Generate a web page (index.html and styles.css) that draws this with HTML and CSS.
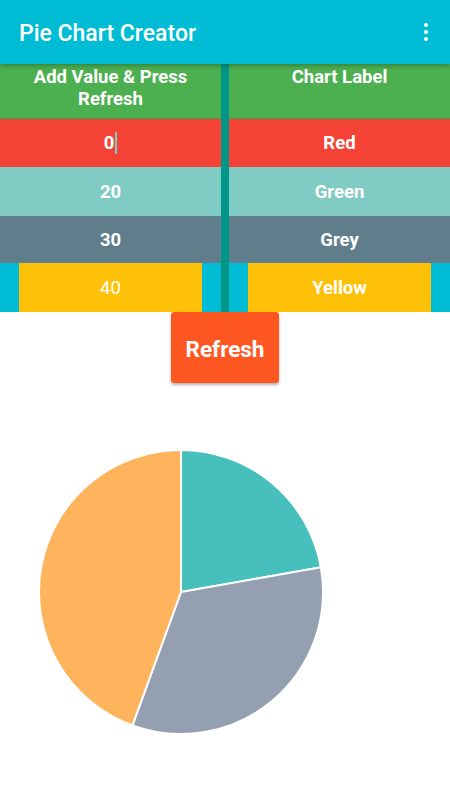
FILE: index.html
```html
<!DOCTYPE html>
<html>

<head>
    <meta name="viewport" content="width=device-width">
    <link rel="stylesheet" href="styles.css">
    <title>Pie Chart Creator</title>
</head>

<body>
    <div class="toolbar">
        <div class="title">Pie Chart Creator</div>
        <div class="overflow"><span></span><span></span><span></span></div>
    </div>

    <div class="table">
        <div class="divider"></div>

        <div class="cell head">Add Value &amp; Press Refresh</div>
        <div class="cell head">Chart Label</div>

        <div class="cell red"><span class="caret">0</span></div>
        <div class="cell red">Red</div>

        <div class="cell green">20</div>
        <div class="cell green">Green</div>

        <div class="cell grey">30</div>
        <div class="cell grey">Grey</div>

        <div class="cell pad"><div class="yellow light">40</div></div>
        <div class="cell pad"><div class="yellow">Yellow</div></div>
    </div>

    <div class="actions">
        <button class="refresh">Refresh</button>
    </div>

    <div class="chart">
        <svg width="300" height="300" viewBox="0 0 300 300">
            <path d="M150 150 L150 8 A142 142 0 0 1 289.84 125.34 Z" fill="#46BFBD" stroke="#fff" stroke-width="2" />
            <path d="M150 150 L289.84 125.34 A142 142 0 0 1 101.43 283.44 Z" fill="#949FB1" stroke="#fff" stroke-width="2" />
            <path d="M150 150 L101.43 283.44 A142 142 0 0 1 150 8 Z" fill="#FDB45C" stroke="#fff" stroke-width="2" />
        </svg>
    </div>
</body>

</html>
```

FILE: styles.css
```css
body,
html {
    width: 100%;
    height: 100%;
}

body {
    margin: 0;
    background: #fff;
    font-family: Roboto, "Noto Sans", sans-serif;
}

.toolbar {
    height: 64px;
    background-color: #00BCD4;
    display: flex;
    align-items: center;
    justify-content: space-between;
    padding: 0 22px 0 19px;
    box-shadow: 0 2px 4px rgba(0, 0, 0, 0.25);
    position: relative;
    z-index: 1;
}

.title {
    color: #fff;
    font-size: 23px;
    font-weight: 500;
    margin-top: 3px;
}

.overflow {
    display: flex;
    flex-direction: column;
    gap: 3px;
}

.overflow span {
    width: 4px;
    height: 4px;
    border-radius: 50%;
    background: #fff;
}

.table {
    display: grid;
    grid-template-columns: 221px 8px 221px;
    grid-template-rows: 55px 48px 49px 47px 49px;
}

.divider {
    grid-column: 2;
    grid-row: 1 / -1;
    background-color: #009688;
}

.cell {
    display: flex;
    align-items: center;
    justify-content: center;
    text-align: center;
    color: #fff;
    font-size: 18.5px;
    font-weight: 700;
}

.cell:nth-child(even) {
    grid-column: 1;
}

.cell:nth-child(odd) {
    grid-column: 3;
}

.head {
    background-color: #4CAF50;
    align-items: flex-start;
    line-height: 22px;
    padding: 2px 20px 0;
    border-bottom: 1px solid #3f9e43;
}

.red {
    background-color: #F44336;
}

.green {
    background-color: #80CBC4;
}

.grey {
    background-color: #607D8B;
}

.pad {
    background-color: #00BCD4;
    align-items: stretch;
    padding: 0 19px;
}

.yellow {
    flex: 1;
    display: flex;
    align-items: center;
    justify-content: center;
    background-color: #FFC107;
}

.light {
    font-weight: 400;
}

.caret {
    border-right: 2px solid #80CBC4;
    padding-right: 1px;
    line-height: 22px;
}

.actions {
    display: flex;
    justify-content: center;
}

.refresh {
    width: 108px;
    height: 71px;
    border: none;
    border-radius: 3px;
    background-color: #FF5722;
    color: #fff;
    font-family: Roboto, "Noto Sans", sans-serif;
    font-size: 22.5px;
    font-weight: 700;
    padding: 3px 0 0;
    box-shadow: 0 2px 3px rgba(0, 0, 0, 0.3);
}

.chart {
    padding: 59px 0 0 31px;
}

.chart svg {
    display: block;
}
```
